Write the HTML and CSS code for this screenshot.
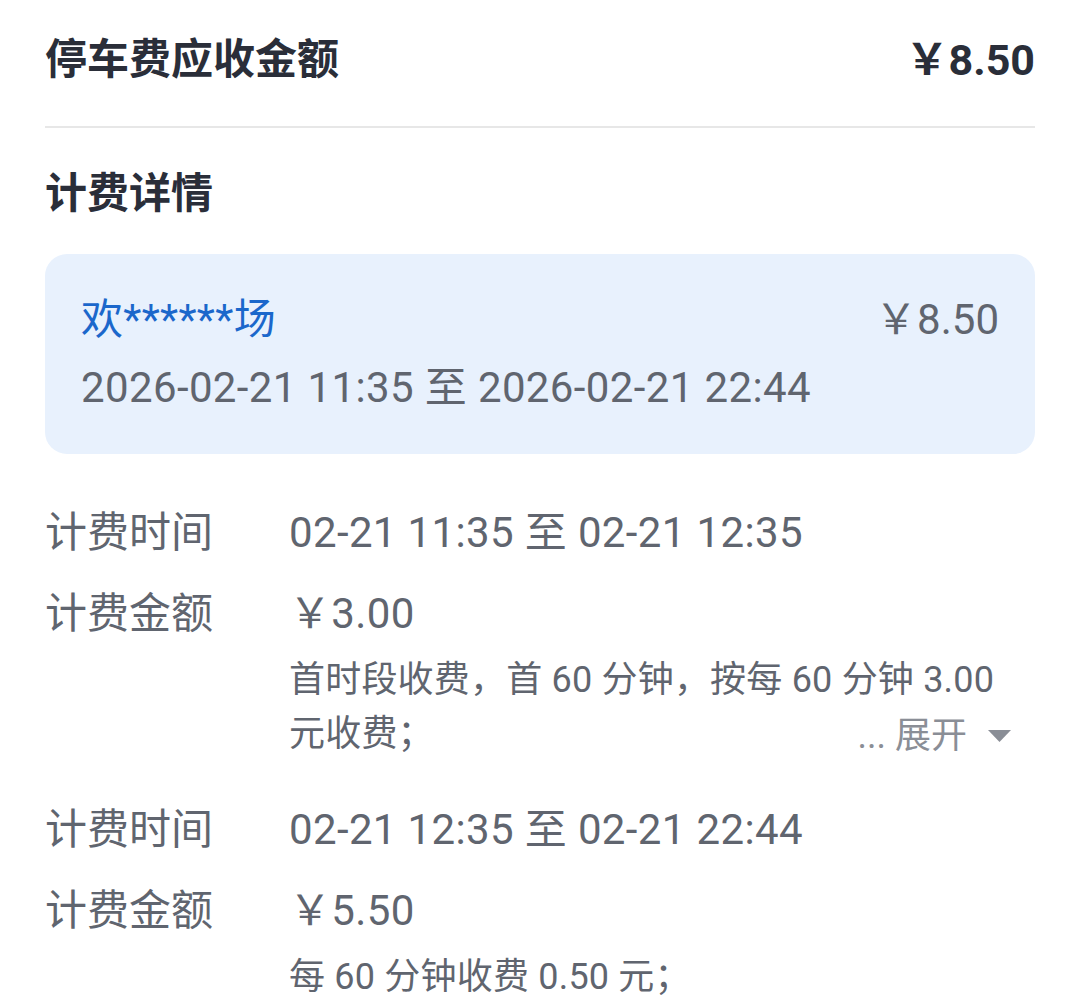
FILE: index.html
```html
<!DOCTYPE html>
<html lang="zh-CN">
<head>
<meta charset="utf-8">
<title>计费详情</title>
<link rel="stylesheet" href="styles.css">
</head>
<body>
<div class="page">
  <div class="summary">
    <span class="summary-title">停车费应收金额</span>
    <span class="summary-amount">￥8.50</span>
  </div>

  <h2 class="section-title">计费详情</h2>

  <div class="lot-card">
    <div class="lot-head">
      <span class="lot-name">欢******场</span>
      <span class="lot-amount">￥8.50</span>
    </div>
    <div class="lot-time">2026-02-21 11:35 至 2026-02-21 22:44</div>
  </div>

  <div class="fee-list">
    <div class="fee-item">
      <div class="fee-row">
        <span class="fee-label">计费时间</span>
        <span class="fee-value">02-21 11:35 至 02-21 12:35</span>
      </div>
      <div class="fee-row">
        <span class="fee-label">计费金额</span>
        <span class="fee-value">￥3.00</span>
      </div>
      <div class="fee-desc">
        <span class="fee-desc-text">首时段收费，首 60 分钟，按每 60 分钟 3.00<br>元收费；</span>
        <span class="fee-expand">... 展开<svg class="fee-expand-icon" width="23" height="12" viewBox="0 0 23 12"><path d="M0 0 H23 L11.5 12 Z"/></svg></span>
      </div>
    </div>

    <div class="fee-item">
      <div class="fee-row">
        <span class="fee-label">计费时间</span>
        <span class="fee-value">02-21 12:35 至 02-21 22:44</span>
      </div>
      <div class="fee-row">
        <span class="fee-label">计费金额</span>
        <span class="fee-value">￥5.50</span>
      </div>
      <div class="fee-desc">
        <span class="fee-desc-text">每 60 分钟收费 0.50 元；</span>
      </div>
    </div>
  </div>
</div>
</body>
</html>
```

FILE: styles.css
```css
* {
  box-sizing: border-box;
}

html, body {
  margin: 0;
  padding: 0;
  background: #ffffff;
}

body {
  font-family: Roboto, "Noto Sans CJK SC", sans-serif;
  color: #60656f;
  overflow: hidden;
}

.page {
  padding: 0 45px;
}

/* summary */
.summary {
  display: flex;
  justify-content: space-between;
  align-items: center;
  padding: 30px 0 36px;
  border-bottom: 2px solid #e7e7e7;
}

.summary-title {
  font-size: 42px;
  line-height: 60px;
  font-weight: 700;
  color: #2a2e39;
}

.summary-amount {
  font-size: 43px;
  line-height: 60px;
  font-weight: 700;
  color: #2a2e39;
}

/* section title */
.section-title {
  margin: 36px 0 30px;
  font-size: 42px;
  line-height: 60px;
  font-weight: 700;
  color: #2a2e39;
}

/* parking lot card */
.lot-card {
  background: #e8f1fd;
  border-radius: 22px;
  padding: 38px 36px;
  display: flex;
  flex-direction: column;
  gap: 12px;
}

.lot-head {
  display: flex;
  justify-content: space-between;
  align-items: center;
}

.lot-name {
  font-size: 42px;
  line-height: 56px;
  color: #1b67cb;
  letter-spacing: 0.3px;
}

.lot-amount {
  font-size: 42px;
  line-height: 56px;
  color: #60656f;
}

.lot-time {
  font-size: 42px;
  line-height: 56px;
  color: #60656f;
  letter-spacing: 0.37px;
}

/* fee list */
.fee-list {
  margin-top: 51px;
  display: flex;
  flex-direction: column;
  gap: 41px;
}

.fee-item {
  display: flex;
  flex-direction: column;
}

.fee-row {
  display: flex;
  font-size: 42px;
  line-height: 56px;
  margin-bottom: 25px;
}

.fee-row:nth-child(2) {
  margin-bottom: 11px;
}

.fee-label {
  width: 244px;
  flex: none;
  color: #60656f;
}

.fee-value {
  color: #60656f;
  letter-spacing: 0.36px;
}

.fee-desc {
  position: relative;
  padding-left: 244px;
  font-size: 36px;
  line-height: 54px;
  color: #60656f;
}

.fee-desc-text {
  display: block;
  letter-spacing: 0.2px;
}

.fee-expand {
  position: absolute;
  right: 24px;
  bottom: -2px;
  display: flex;
  align-items: center;
  gap: 21px;
  color: #8a8e96;
  line-height: 54px;
}

.fee-expand-icon {
  fill: #8a8e96;
  display: block;
}
```
